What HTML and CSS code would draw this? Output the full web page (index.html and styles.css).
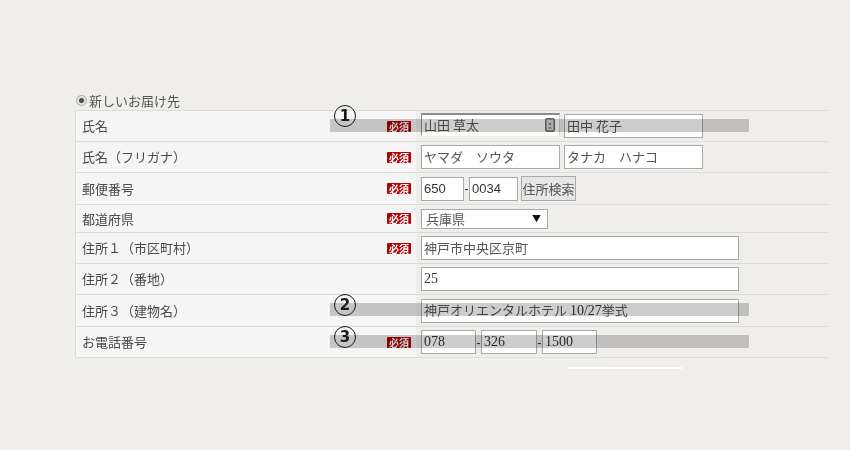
FILE: index.html
```html
<!DOCTYPE html>
<html lang="ja">
<head>
<meta charset="utf-8">
<title>お届け先</title>
<link rel="stylesheet" href="styles.css">
</head>
<body>
<div class="page">
  <div class="dest"><span class="radio"><span class="dot"></span></span><span>新しいお届け先</span></div>
  <div class="form">
    <div class="row h30">
      <div class="label"><span>氏名</span><span class="req">必須</span></div>
      <div class="field">
        <div class="inp w139 hover"><span>山田 草太</span>
          <svg class="card" width="10" height="14" viewBox="0 0 10 14"><rect x="0.5" y="0.5" width="9" height="13" rx="1.5" fill="#9a9a9a" stroke="#6a6a6a"/><rect x="2" y="2" width="6" height="10" fill="#d8d8d8"/><circle cx="5" cy="6" r="1.3" fill="#7a7a7a"/><path d="M2.8 10.5 Q5 7.5 7.2 10.5 Z" fill="#7a7a7a"/></svg>
        </div>
        <div class="inp w139 gap"><span>田中 花子</span></div>
      </div>
    </div>
    <div class="row h30">
      <div class="label"><span>氏名（フリガナ）</span><span class="req">必須</span></div>
      <div class="field">
        <div class="inp w139"><span>ヤマダ　ソウタ</span></div>
        <div class="inp w139 gap"><span>タナカ　ハナコ</span></div>
      </div>
    </div>
    <div class="row h31">
      <div class="label"><span>郵便番号</span><span class="req">必須</span></div>
      <div class="field">
        <div class="inp w43"><span class="num">650</span></div><span class="dash">-</span>
        <div class="inp w49"><span class="num">0034</span></div>
        <div class="btn">住所検索</div>
      </div>
    </div>
    <div class="row h27">
      <div class="label"><span>都道府県</span><span class="req">必須</span></div>
      <div class="field">
        <div class="sel"><span>兵庫県</span><span class="arrow">▼</span></div>
      </div>
    </div>
    <div class="row h30">
      <div class="label"><span>住所１（市区町村）</span><span class="req">必須</span></div>
      <div class="field">
        <div class="inp w318"><span>神戸市中央区京町</span></div>
      </div>
    </div>
    <div class="row h30">
      <div class="label"><span>住所２（番地）</span></div>
      <div class="field">
        <div class="inp w318"><span class="serif">25</span></div>
      </div>
    </div>
    <div class="row h31">
      <div class="label"><span>住所３（建物名）</span></div>
      <div class="field">
        <div class="inp w318"><span>神戸オリエンタルホテル <span class="serif">10/27</span>挙式</span></div>
      </div>
    </div>
    <div class="row h30">
      <div class="label"><span>お電話番号</span><span class="req">必須</span></div>
      <div class="field">
        <div class="inp w55"><span class="serif">078</span></div><span class="dash">-</span>
        <div class="inp w56"><span class="serif">326</span></div><span class="dash">-</span>
        <div class="inp w55"><span class="serif">1500</span></div>
      </div>
    </div>
  </div>
  <div class="bar b1"></div>
  <div class="bar b2"></div>
  <div class="bar b3"></div>
  <div class="circ c1">1</div>
  <div class="circ c2">2</div>
  <div class="circ c3">3</div>
  <div class="wline"></div>
</div>
</body>
</html>
```
FILE: styles.css
```css
html, body {
  margin: 0;
  padding: 0;
  background: #efeeeb;
}
body {
  font-family: "Noto Sans CJK JP", "Noto Sans", sans-serif;
  font-size: 13px;
  color: #444;
}
.page {
  position: relative;
  margin: 91px 0 0 75px;
  width: 753px;
  height: 300px;
}
.dest {
  display: flex;
  align-items: center;
  height: 19px;
  line-height: 19px;
  color: #555;
}
.radio {
  width: 9px;
  height: 9px;
  margin: 0 2px 0 1px;
  border: 1px solid #aaa;
  border-radius: 50%;
  background: #e2e2e2;
  display: flex;
  align-items: center;
  justify-content: center;
}
.dot {
  width: 5px;
  height: 5px;
  border-radius: 50%;
  background: #4a4a4a;
}
.form {
  border-top: 1px solid #dcdbd8;
  border-left: 1px solid #dcdbd8;
}
.row {
  display: flex;
  border-bottom: 1px solid #dcdbd8;
  box-sizing: content-box;
}
.h27 { height: 27px; }
.h30 { height: 30px; }
.h31 { height: 31px; }
.label {
  width: 340px;
  box-sizing: border-box;
  background: #f5f5f5;
  padding: 0 5px 0 6px;
  display: flex;
  align-items: center;
  justify-content: space-between;
  line-height: 16px;
  color: #4a4a4a;
}
.req {
  background: #b40000;
  color: #fff;
  font-size: 10px;
  line-height: 11px;
  height: 11px;
  padding: 0 2px;
  border-radius: 1px;
  font-weight: bold;
}
.field {
  flex: 1;
  padding-left: 5px;
  display: flex;
  align-items: center;
}
.inp {
  height: 24px;
  box-sizing: border-box;
  background: #fff;
  border: 1px solid #a9a9a9;
  display: flex;
  align-items: center;
  justify-content: space-between;
  padding: 0 2px 0 2px;
  color: #555;
  line-height: 16px;
  white-space: nowrap;
  overflow: hidden;
}
.hover {
  height: 23px;
  align-self: flex-start;
  margin-top: 2px;
  border-width: 2px 1px 1px 1px;
  border-color: #8a8a8a #d6d6d6 #ffffff #8a8a8a;
  padding-right: 4px;
}
.card { flex: none; }
.gap { margin-left: 4px; }
.w139 { width: 139px; }
.w43 { width: 43px; }
.w49 { width: 49px; }
.w55 { width: 55px; }
.w56 { width: 56px; }
.w318 { width: 318px; }
.num {
  font-family: "Liberation Sans", Arial, sans-serif;
  color: #333;
}
.serif {
  font-family: "Liberation Serif", "Times New Roman", serif;
  font-size: 14px;
  color: #333;
}
.dash {
  width: 5px;
  text-align: center;
  color: #333;
  font-family: "Liberation Sans", Arial, sans-serif;
}
.btn {
  margin-left: 3px;
  width: 55px;
  height: 25px;
  box-sizing: border-box;
  border: 1px solid #a9a9a9;
  background: #e6e6e6;
  display: flex;
  align-items: center;
  justify-content: center;
  color: #555;
  font-size: 13px;
}
.sel {
  width: 127px;
  height: 20px;
  box-sizing: border-box;
  border: 1px solid #a9a9a9;
  background: #fff;
  display: flex;
  align-items: center;
  justify-content: space-between;
  padding: 0 6px 0 4px;
  color: #555;
  line-height: 16px;
}
.arrow {
  font-size: 9px;
  color: #111;
}
.bar {
  position: absolute;
  left: 255px;
  width: 419px;
  height: 13px;
  background: #cdcdcd;
  mix-blend-mode: multiply;
}
.b1 { top: 28px; }
.b2 { top: 212px; }
.b3 { top: 244px; }
.circ {
  position: absolute;
  left: 259px;
  width: 20px;
  height: 20px;
  border: 1.6px solid #1a1a1a;
  border-radius: 50%;
  display: flex;
  align-items: center;
  justify-content: center;
  font-family: "DejaVu Sans", sans-serif;
  font-size: 15px;
  font-weight: bold;
  line-height: 1;
  color: #1a1a1a;
}
.c1 { top: 14px; }
.c2 { top: 203px; }
.c3 { top: 235px; }
.wline {
  position: absolute;
  left: 492px;
  top: 276px;
  width: 115px;
  height: 2px;
  background: #fff;
}
```
